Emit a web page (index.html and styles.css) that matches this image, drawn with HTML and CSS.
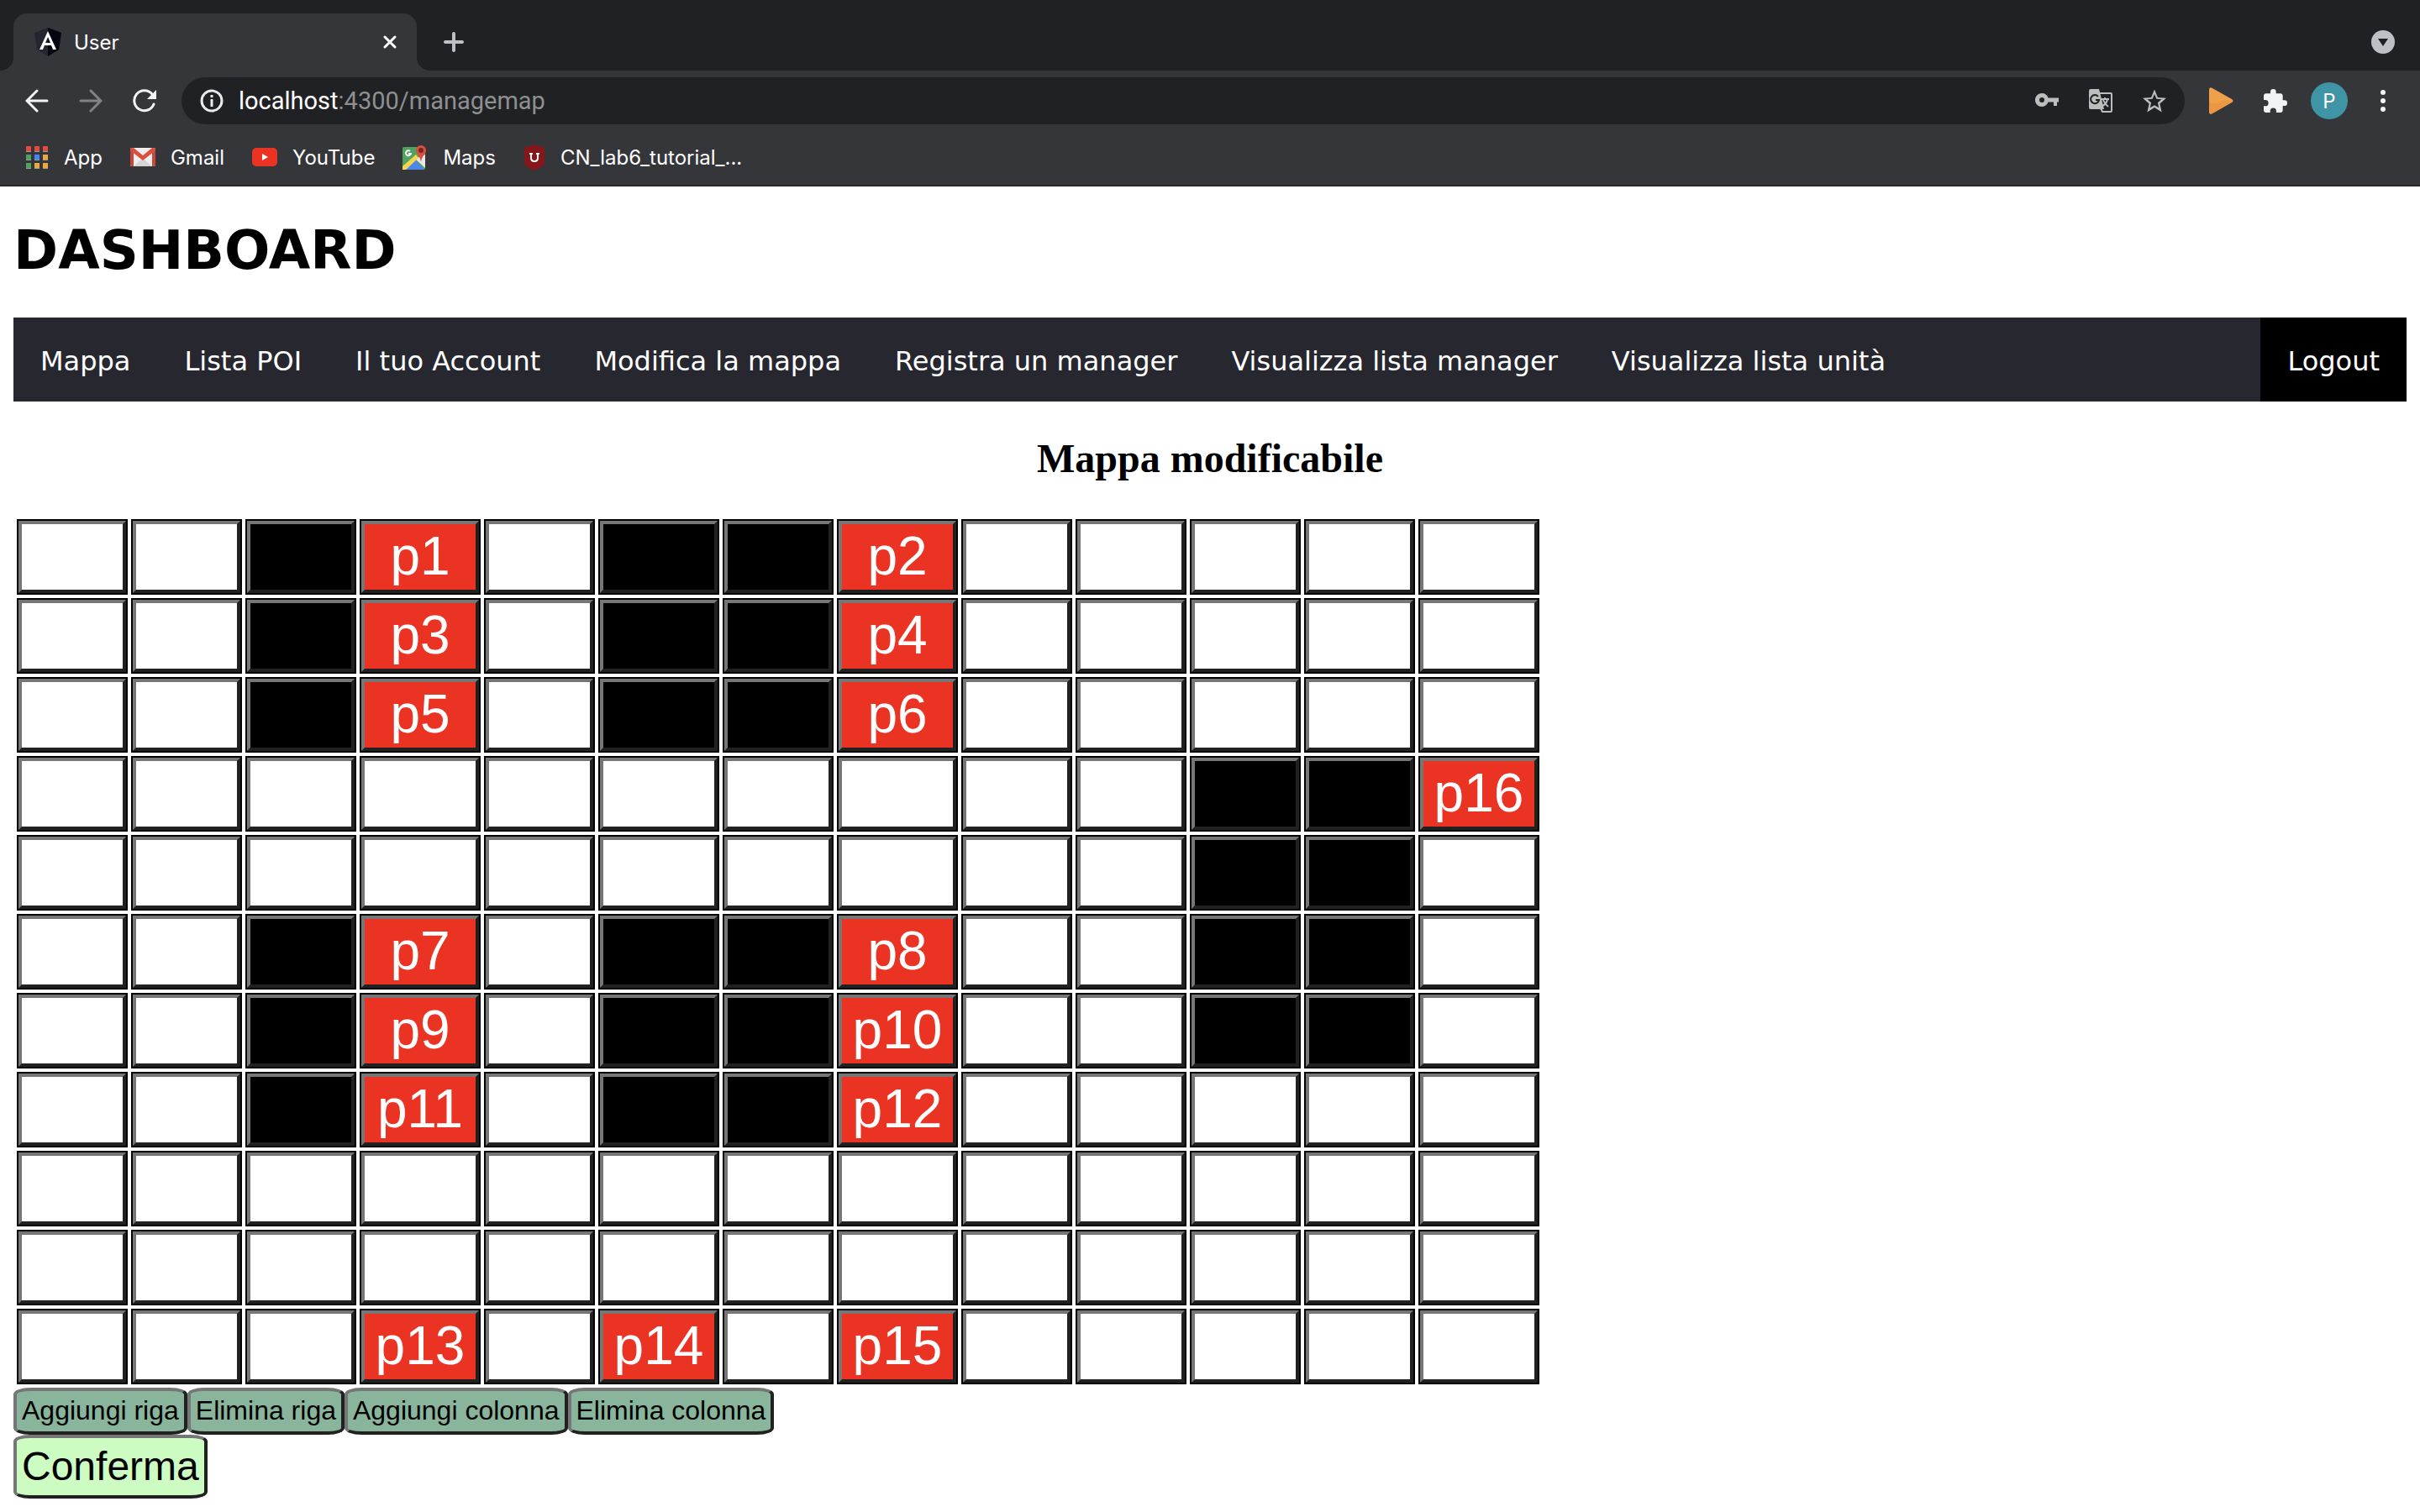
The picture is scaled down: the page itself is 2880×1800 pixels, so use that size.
FILE: index.html
```html
<!DOCTYPE html>
<html lang="it">
<head>
<meta charset="utf-8">
<title>User</title>
<link rel="stylesheet" href="styles.css">
</head>
<body>
<div class="browser">
  <div class="tabstrip">
    <div class="tab">
      <svg class="tab-icon" viewBox="0 0 34 34"><path fill="#23262f" d="M17 0 33 6 30 26 17 34 4 26 1 6z"/><path fill="#04060f" d="M17 0 33 6 30 26 17 34z"/><path fill="#fff" fill-rule="evenodd" d="M17 4 27 26h-4l-2-5h-8l-2 5H7zM17 11l-3 7h6z"/></svg>
      <span class="tab-title">User</span>
      <button class="icon-btn tab-close" aria-label="Chiudi scheda"><svg width="16" height="16" viewBox="0 0 16 16"><path d="M2 2 14 14M14 2 2 14" stroke="#fff" stroke-width="3" stroke-linecap="round"/></svg></button>
    </div>
    <button class="icon-btn" aria-label="Nuova scheda"><svg width="24" height="24" viewBox="0 0 24 24"><path d="M12 2v20M2 12h20" stroke="#bdc1c6" stroke-width="4" stroke-linecap="round"/></svg></button>
    <button class="icon-btn tab-search" aria-label="Cerca schede"><svg width="28" height="28" viewBox="0 0 28 28"><circle cx="14" cy="14" r="14" fill="#bdc1c6"/><path d="M8 10h12l-6 9z" fill="#202124"/></svg></button>
  </div>
  <div class="toolbar">
    <button class="icon-btn" aria-label="Indietro"><svg width="28" height="28" viewBox="0 0 28 28"><path d="M26 14H3M14 2 2 14l12 12" fill="none" stroke="#f1f3f4" stroke-width="3" stroke-linecap="round"/></svg></button>
    <button class="icon-btn" aria-label="Avanti"><svg width="28" height="28" viewBox="0 0 28 28"><path d="M2 14h23M14 2l12 12-12 12" fill="none" stroke="#828385" stroke-width="3" stroke-linecap="round"/></svg></button>
    <button class="icon-btn" aria-label="Ricarica"><svg width="28" height="28" viewBox="0 0 28 28"><path d="M25 18A12 12 0 1 1 23 6" fill="none" stroke="#f1f3f4" stroke-width="3" stroke-linecap="round"/><path d="M28 1v11H17z" fill="#f1f3f4"/></svg></button>
    <div class="omnibox">
      <svg width="28" height="28" viewBox="0 0 28 28"><circle cx="14" cy="14" r="12" fill="none" stroke="#e8eaed" stroke-width="3"/><path d="M14 12v9M14 7v3" stroke="#e8eaed" stroke-width="3"/></svg>
      <a class="url" href="#"><span class="host">localhost</span>:4300/managemap</a>
      <div class="omni-actions">
        <button class="icon-btn" aria-label="Password"><svg width="28" height="28" viewBox="0 0 28 28"><path fill="#bdbdbd" fill-rule="evenodd" d="M8 5a8 8 0 1 0 7.500 10.500H22V20h4v-4.500h2V10.500H15.500A8 8 0 0 0 8 5zm0 5a3 3 0 1 1 0 6 3 3 0 0 1 0-6z"/></svg></button>
        <button class="icon-btn" aria-label="Traduci"><svg width="28" height="28" viewBox="0 0 28 28"><path fill="#bdbdbd" d="M2 0h10l6 24H2a2 2 0 0 1-2-2V2a2 2 0 0 1 2-2z"/><path d="M11 9A5 5 0 1 0 12 13H8" fill="none" stroke="#202124" stroke-width="2"/><path d="M13 5h13q1 0 1 1v20q0 1-1 1H16l-2-4M15 12h9M19 10v2M22 12q-1 6-6 8M17 13q2 5 6 8" fill="none" stroke="#bdbdbd" stroke-width="2"/></svg></button>
        <button class="icon-btn" aria-label="Aggiungi ai preferiti"><svg width="28" height="28" viewBox="0 0 24 24"><path fill="#bdbdbd" d="M24 9.240l-8.630-.740L12 .500 8.630 8.500 0 9.240l6.550 5.680L4.580 23.500 12 18.900l7.420 4.600-1.970-8.580zM12 16.400l-4.520 2.730 1.200-5.130-3.990-3.460 5.250-.460L12 5.200l2.060 4.880 5.250.460-3.990 3.460 1.200 5.130z"/></svg></button>
      </div>
    </div>
    <div class="extensions">
      <button class="icon-btn player" aria-label="Estensione"><svg width="30" height="32" viewBox="0 0 30 32"><path fill="#efa04b" d="M1 3q0-4 4-2l23 13q3 2 0 4L5 31q-4 2-4-2z"/><path fill="#ee9743" d="M1 18q7 3 13-1 7-3 15 0L5 31q-4 2-4-2z"/></svg></button>
      <button class="icon-btn" aria-label="Estensioni"><svg width="28" height="28" viewBox="2 1 21 21"><path fill="#f1f3f4" d="M20.500 11H19V7c0-1.100-.900-2-2-2h-4V3.500a2.500 2.500 0 0 0-5 0V5H4c-1.100 0-1.990.900-1.990 2v3.800H3.500a2.700 2.700 0 0 1 0 5.400H2V20c0 1.100.900 2 2 2h3.800v-1.500a2.700 2.700 0 0 1 5.400 0V22H17c1.100 0 2-.900 2-2v-4h1.500a2.500 2.500 0 0 0 0-5z"/></svg></button>
      <button class="avatar">P</button>
      <button class="icon-btn" aria-label="Menu"><svg width="28" height="28" viewBox="0 0 28 28" fill="#f1f3f4"><circle cx="14" cy="4" r="3"/><circle cx="14" cy="14" r="3"/><circle cx="14" cy="24" r="3"/></svg></button>
    </div>
  </div>
  <div class="bookmarks">
    <a href="#"><svg width="28" height="28" viewBox="0 0 28 28"><path fill="#9a9a9a" d="M1 6h6v2H1zM11 6h6v2h-6zM21 6h6v2h-6zM1 16h6v2H1zM11 16h6v2h-6zM21 16h6v2h-6zM1 26h6v2H1zM11 26h6v2h-6zM21 26h6v2h-6z"/><path fill="#e34b3f" d="M1 1h6v6H1zM11 1h6v6h-6zM21 1h6v6h-6z"/><path fill="#4ea35f" d="M1 11h6v6H1zM1 21h6v6H1z"/><path fill="#4285f4" d="M11 11h6v6h-6z"/><path fill="#eda73a" d="M21 11h6v6h-6zM11 21h6v6h-6zM21 21h6v6h-6z"/></svg>App</a>
    <a href="#"><svg width="30" height="28" viewBox="0 0 30 28"><rect y="3" width="30" height="22" rx="2" fill="#eee"/><path fill="#d5d5d5" d="M4 25 15 15l11 10z"/><path fill="#c9473a" d="M0 5q0-2 2-2l2 2v20H2q-2 0-2-2zM30 5q0-2-2-2l-2 2v20h2q2 0 2-2z"/><path fill="#d9503f" d="M1 4q1-1 3-1l11 9 11-9q2 0 3 1v3L15 18 1 7z"/></svg>Gmail</a>
    <a href="#"><svg width="30" height="28" viewBox="0 0 30 28"><rect y="3" width="30" height="22" rx="5" fill="#ea3323"/><path fill="#fff" d="M12 10v8l7-4z"/></svg>YouTube</a>
    <a href="#"><svg width="30" height="30" viewBox="0 0 30 30"><rect y="3" width="27" height="27" rx="2" fill="#4ea35f"/><path fill="#e8e8e8" d="M27 12v16L15 17z"/><path fill="#4f86ec" d="M3 30 15 18l11 12z"/><path fill="#f6d64f" d="m0 26 16-14 3 4L4 30H0z"/><path d="M9 8a3 3 0 1 0 1 3H7" fill="none" stroke="#fff" stroke-width="2"/><path fill="#d9503f" d="M22 1a6 6 0 0 1 6 6c0 5-5 6-6 14-1-8-6-9-6-14a6 6 0 0 1 6-6z"/><circle cx="22" cy="7" r="3" fill="#7c251c"/></svg>Maps</a>
    <a href="#"><svg width="26" height="32" viewBox="0 0 26 32"><path fill="#85171b" d="M13 0q3 4 12 4v18q0 5-12 10Q1 27 1 22V4q9 0 12-4z"/><path d="M7 12h4M15 12h4M9 12v5q0 4 4 4t4-4v-5" fill="none" stroke="#fff" stroke-width="2"/></svg>CN_lab6_tutorial_...</a>
  </div>
</div>
<main class="page">
  <h1>DASHBOARD</h1>
  <nav class="menu">
    <a href="#">Mappa</a>
    <a href="#">Lista POI</a>
    <a href="#">Il tuo Account</a>
    <a href="#">Modifica la mappa</a>
    <a href="#">Registra un manager</a>
    <a href="#">Visualizza lista manager</a>
    <a href="#">Visualizza lista unità</a>
    <a href="#" class="logout">Logout</a>
  </nav>
  <h2>Mappa modificabile</h2>
  <table class="map"><tbody id="map"></tbody></table>
  <div class="actions">
    <button class="edit">Aggiungi riga</button>
    <button class="edit">Elimina riga</button>
    <button class="edit">Aggiungi colonna</button>
    <button class="edit">Elimina colonna</button>
  </div>
  <button class="confirm">Conferma</button>
</main>
<script src="map.js"></script>
</body>
</html>
```
FILE: styles.css
```css
body { margin: 0; background: #fff; color: #000; }
button { margin: 0; font-family: "Liberation Sans", Arial, sans-serif; color: #000; }
svg { display: block; flex: none; }

.browser { background: #35363a; border-bottom: 2px solid #2a2528; color: #fff; font-family: Inter, Roboto, sans-serif; }
.icon-btn { display: flex; padding: 0; border: 0; background: none; }

.tabstrip { display: flex; align-items: center; gap: 32px; height: 68px; padding: 16px 30px 0 16px; background: #202124; }
.tab { position: relative; display: flex; align-items: center; gap: 14px; box-sizing: border-box; width: 480px; height: 68px; padding: 0 24px; border-radius: 16px 16px 0 0; background: #35363a; }
.tab::before, .tab::after { content: ""; position: absolute; bottom: 0; width: 16px; height: 16px; }
.tab::before { left: -16px; background: radial-gradient(circle at 0 0, transparent 16px, #35363a 16px); }
.tab::after { right: -16px; background: radial-gradient(circle at 100% 0, transparent 16px, #35363a 16px); }
.tab-icon { width: 34px; height: 34px; }
.tab-title { font-size: 24px; }
.tab-close, .tab-search { margin-left: auto; }

.toolbar { display: flex; align-items: center; gap: 36px; height: 72px; padding: 0 30px; }
.omnibox { display: flex; flex: 1; align-items: center; gap: 18px; height: 56px; margin-left: -6px; padding: 0 22px; border-radius: 28px; background: #202124; }
.url { color: #8e8f91; font-size: 29px; font-family: Roboto, sans-serif; text-decoration: none; }
.host { color: #fff; }
.omni-actions { display: flex; gap: 36px; margin-left: auto; }
.extensions { display: flex; align-items: center; gap: 28px; margin-left: -8px; }
.player { margin-right: 8px; }
.avatar { width: 44px; height: 44px; padding: 0; border: 0; border-radius: 50%; background: #3f94a6; color: #fff; font: 24px Inter, sans-serif; }

.bookmarks { display: flex; align-items: center; gap: 33px; height: 64px; padding: 0 30px; }
.bookmarks a { display: flex; align-items: center; gap: 18px; padding-bottom: 2px; color: #fff; font-size: 24px; text-decoration: none; }

.page { padding: 0 16px; }
h1 { margin: 0; padding: 39px 0 42px; font: bold 64px/75px "DejaVu Sans", Verdana, sans-serif; }
.menu { display: flex; background: #27272f; }
.menu a { padding: 4px 32px 0; color: #fff; font: 32px/96px "DejaVu Sans", Verdana, sans-serif; text-decoration: none; white-space: nowrap; }
.menu .logout { margin-left: auto; background: #000; }
h2 { margin: 40px 0; font: bold 48px/56px "Liberation Serif", "Times New Roman", serif; text-align: center; }

.map { border-spacing: 4px; }
.map td { padding: 0; border: 2px solid #000; }
.cell { display: block; width: 100%; min-width: 128px; height: 86px; padding: 0 0 2px; border: 4px solid; border-color: #767676 #212121 #212121 #767676; background: #fff; color: #fff; font-size: 64px; line-height: 74px; }
.cell.wall { background: #000; }
.cell.poi { min-width: 140px; background: #eb3323; }

.actions { display: flex; }
.edit, .confirm { padding: 0 6px 2px; border: 4px solid; border-color: #767676 #212121 #212121 #767676; border-radius: 20px / 8px; }
.edit { height: 56px; background: #88b59b; font-size: 32px; }
.confirm { display: block; height: 76px; background: #ccfcc2; font-size: 48px; }
```
FILE: map.js
```js
// "#" is a wall, "." a free cell; POI cells carry their label.
const rows = [
  ". . # p1 . # # p2 . . . . .",
  ". . # p3 . # # p4 . . . . .",
  ". . # p5 . # # p6 . . . . .",
  ". . . . . . . . . . # # p16",
  ". . . . . . . . . . # # .",
  ". . # p7 . # # p8 . . # # .",
  ". . # p9 . # # p10 . . # # .",
  ". . # p11 . # # p12 . . . . .",
  ". . . . . . . . . . . . .",
  ". . . . . . . . . . . . .",
  ". . . p13 . p14 . p15 . . . . ."
];
const body = document.getElementById("map");
rows.forEach((row, r) => {
  const tr = body.insertRow();
  row.split(" ").forEach((value, c) => {
    const cell = document.createElement("button");
    cell.className = "cell";
    cell.setAttribute("aria-label", `Riga ${r + 1}, colonna ${c + 1}`);
    if (value === "#") cell.classList.add("wall");
    else if (value !== ".") {
      cell.classList.add("poi");
      cell.textContent = value;
      cell.removeAttribute("aria-label");
    }
    tr.insertCell().append(cell);
  });
});
```
